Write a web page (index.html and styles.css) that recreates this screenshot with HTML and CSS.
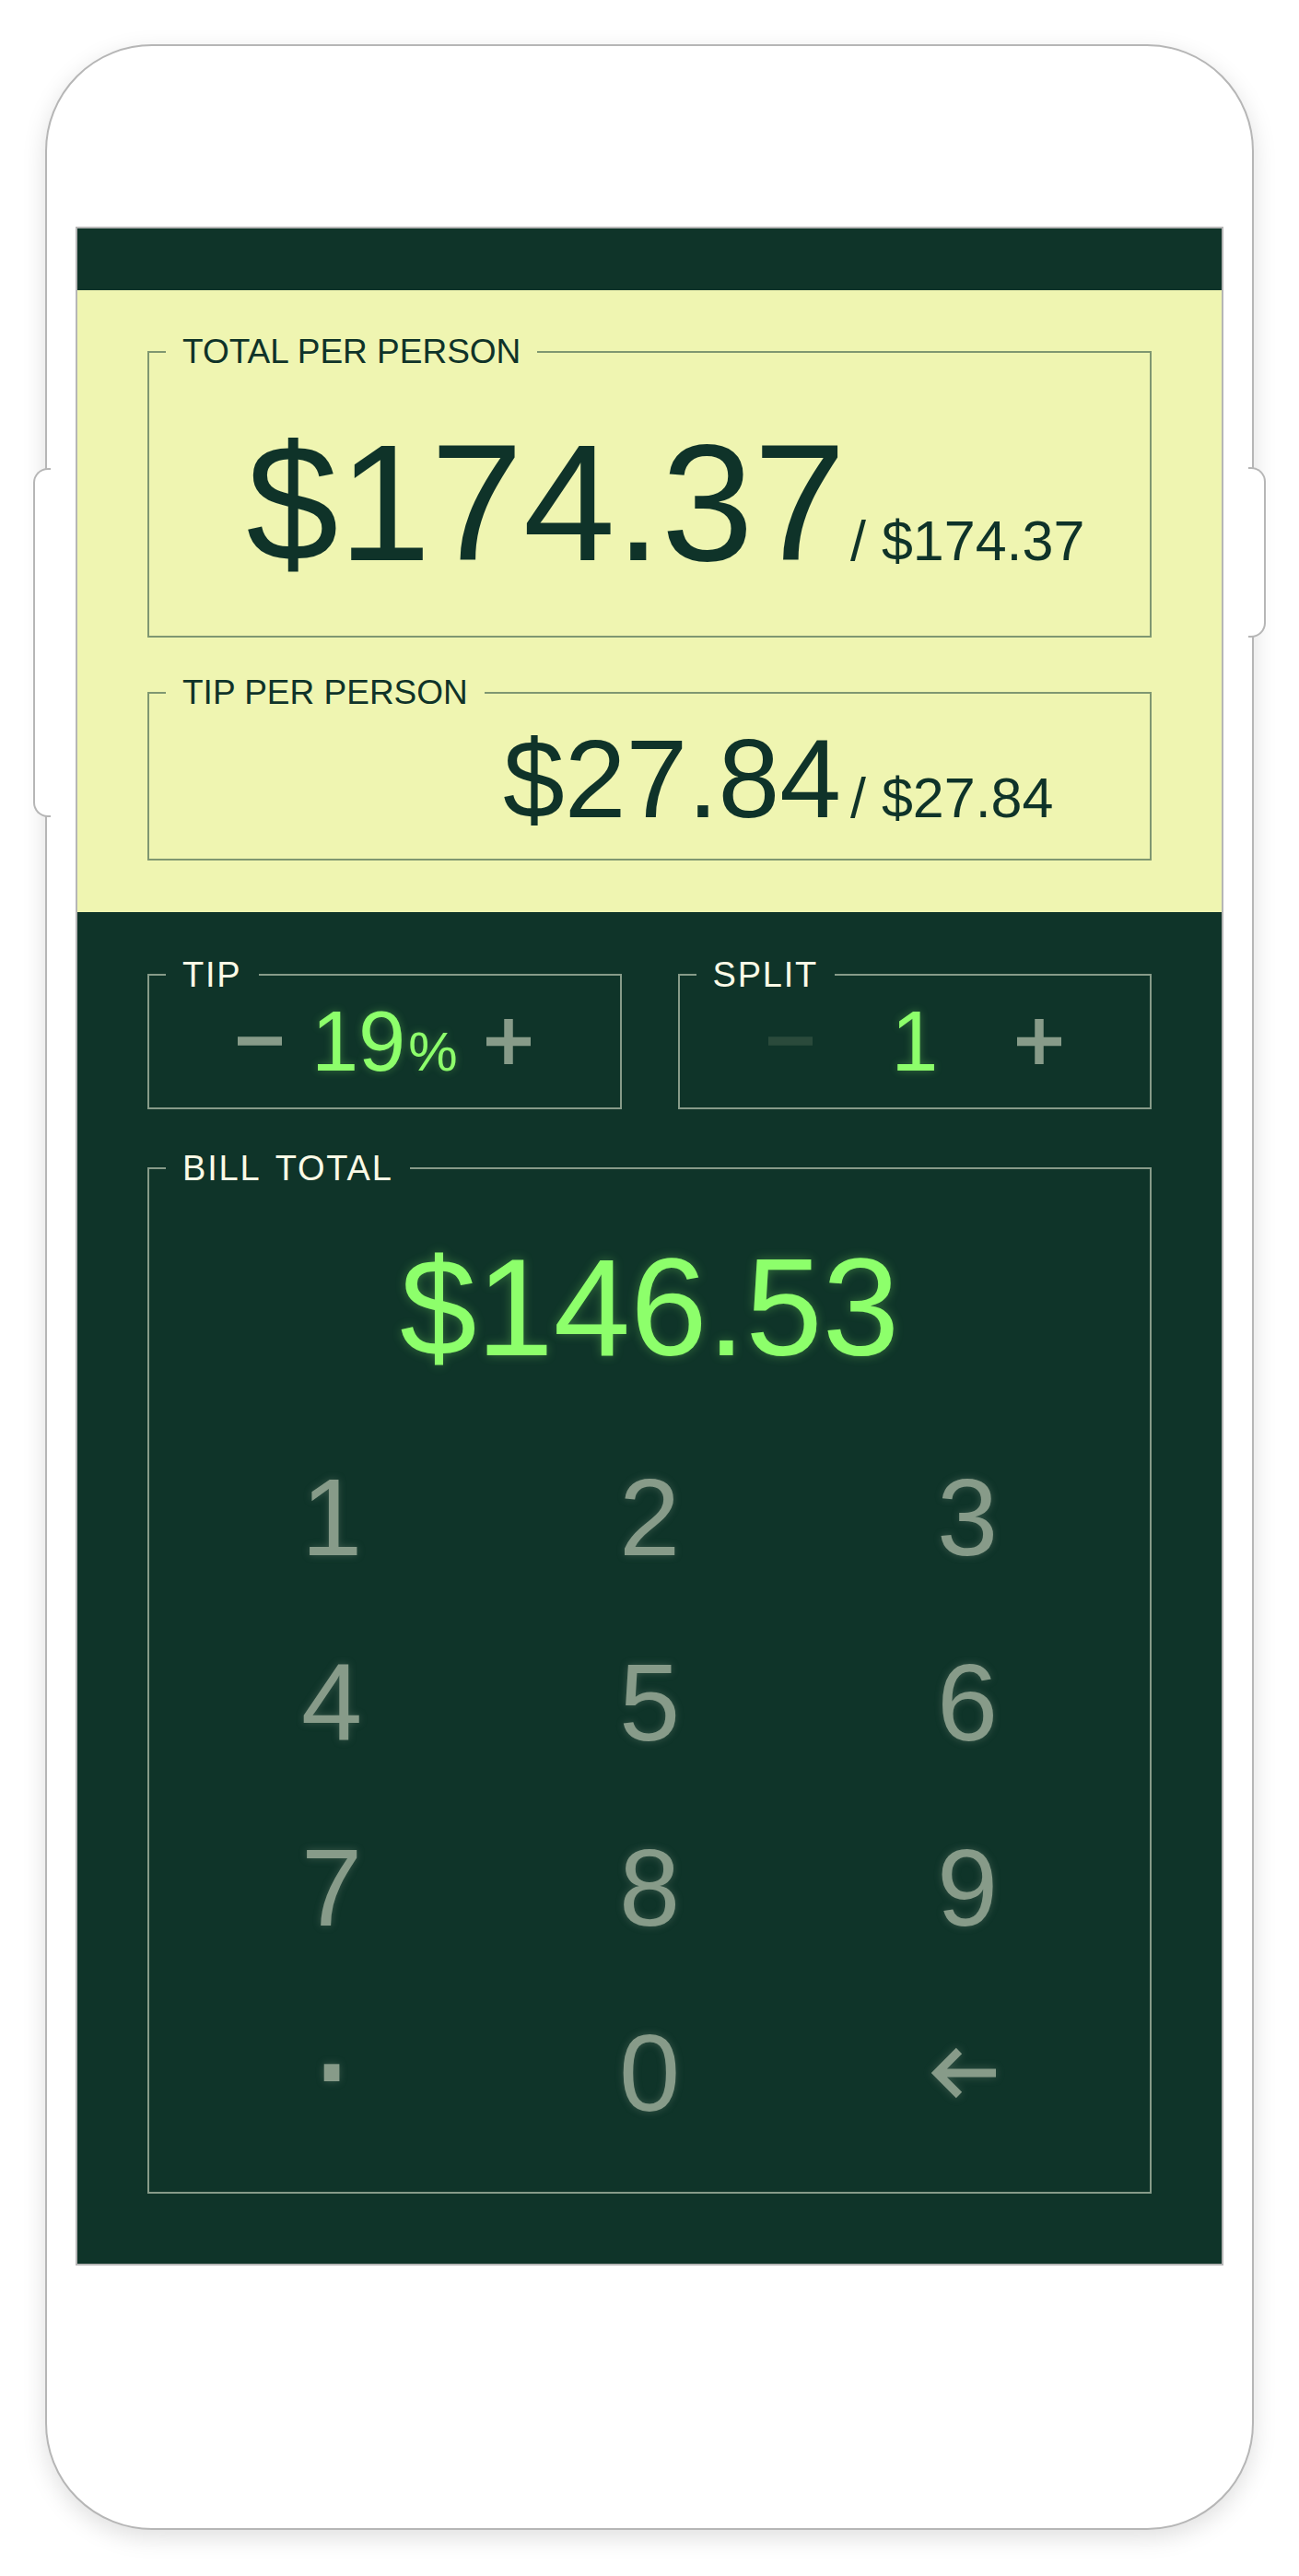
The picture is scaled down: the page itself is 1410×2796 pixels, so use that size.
FILE: index.html
```html
<!DOCTYPE html>
<html lang="en">
<head>
<meta charset="utf-8">
<title>Tip Calculator</title>
<link rel="stylesheet" href="styles.css">
</head>
<body>
<div class="page">
  <div class="phone">
    <div class="screen">
      <div class="status"></div>
      <section class="results">
        <fieldset class="panel panel-light">
          <legend>TOTAL PER PERSON</legend>
          <div class="amount-row amount-row-total">
            <span class="amount-main">$174.37</span>
            <span class="amount-sub">/ $174.37</span>
          </div>
        </fieldset>
        <fieldset class="panel panel-light panel-tip-pp">
          <legend>TIP PER PERSON</legend>
          <div class="amount-row amount-row-tip">
            <span class="amount-main">$27.84</span>
            <span class="amount-sub">/ $27.84</span>
          </div>
        </fieldset>
      </section>
      <section class="controls">
        <div class="steppers">
          <fieldset class="panel panel-dark">
            <legend>TIP</legend>
            <div class="stepper">
              <button class="step" aria-label="decrease tip"><svg width="48" height="48" viewBox="0 0 48 48"><path d="M0 24H48" stroke="currentColor" stroke-width="9.5"/></svg></button>
              <div class="step-value">19<span class="pct">%</span></div>
              <button class="step" aria-label="increase tip"><svg width="48" height="49" viewBox="0 0 48 49"><path d="M0 24.5H48M24 0V49" stroke="currentColor" stroke-width="9.5"/></svg></button>
            </div>
          </fieldset>
          <fieldset class="panel panel-dark">
            <legend>SPLIT</legend>
            <div class="stepper">
              <button class="step step-disabled" aria-label="decrease split"><svg width="48" height="48" viewBox="0 0 48 48"><path d="M0 24H48" stroke="currentColor" stroke-width="9.5"/></svg></button>
              <div class="step-value">1</div>
              <button class="step" aria-label="increase split"><svg width="48" height="49" viewBox="0 0 48 49"><path d="M0 24.5H48M24 0V49" stroke="currentColor" stroke-width="9.5"/></svg></button>
            </div>
          </fieldset>
        </div>
        <fieldset class="panel panel-dark panel-bill">
          <legend>BILL TOTAL</legend>
          <div class="bill-amount">$146.53</div>
          <div class="keypad">
            <button class="key">1</button>
            <button class="key">2</button>
            <button class="key">3</button>
            <button class="key">4</button>
            <button class="key">5</button>
            <button class="key">6</button>
            <button class="key">7</button>
            <button class="key">8</button>
            <button class="key">9</button>
            <button class="key"><span class="key-dot">.</span></button>
            <button class="key">0</button>
            <button class="key key-back" aria-label="backspace"><svg width="70" height="56" viewBox="0 0 70 56"><path d="M30 4 6 28l24 24M8 28h62" fill="none" stroke="currentColor" stroke-width="9"/></svg></button>
          </div>
        </fieldset>
      </section>
    </div>
  </div>
</div>
</body>
</html>
```
FILE: styles.css
```css
* {
  box-sizing: border-box;
}

body {
  margin: 0;
  background: #ffffff;
  font-family: "Liberation Sans", Arial, Helvetica, sans-serif;
}

.page {
  display: flex;
  justify-content: center;
  padding: 48px 0 50px;
}

.phone {
  position: relative;
  width: 1312px;
  border: 2px solid #b6b6b6;
  border-radius: 116px;
  background: #ffffff;
  padding: 196px 31px 285px;
  box-shadow: 0 8px 26px rgba(0, 0, 0, 0.13);
}

.phone::before,
.phone::after {
  content: "";
  position: absolute;
  width: 17px;
  background: #ffffff;
  border: 2px solid #b6b6b6;
}

.phone::before {
  left: -15px;
  top: 458px;
  height: 375px;
  border-right: 0;
  border-radius: 16px 0 0 16px;
}

.phone::after {
  right: -15px;
  top: 457px;
  height: 181px;
  border-left: 0;
  border-radius: 0 16px 16px 0;
}

.screen {
  border: 2px solid #b6b6b6;
  background: #0f3429;
}

.status {
  height: 67px;
  background: #0f3429;
}

.results {
  background: #eff5b1;
  padding: 48px 76px 56px;
}

.controls {
  background: #0f3429;
  padding: 49px 76px 76px;
}

.panel {
  margin: 0;
  padding: 0;
  min-width: 0;
  border: 2px solid;
}

.panel legend {
  margin-left: 18px;
  padding: 0 18px;
  font-size: 37px;
  line-height: 38px;
}

.panel-light {
  border-color: #7f9771;
  color: #0f3329;
}

.panel-tip-pp {
  margin-top: 41px;
}

.panel-dark {
  border-color: #879b89;
}

.panel-dark legend {
  color: #fbfae6;
  font-size: 38px;
  letter-spacing: 1.8px;
  word-spacing: 5px;
}

.amount-row {
  display: grid;
  grid-template-columns: 1fr 325px;
  column-gap: 5px;
  align-items: baseline;
}

.amount-main {
  text-align: right;
  line-height: 1;
}

.amount-sub {
  font-size: 61px;
  line-height: 1;
}

.amount-row-total {
  padding: 55px 0 54px;
}

.amount-row-total .amount-main {
  font-size: 180px;
}

.amount-row-tip {
  padding: 14px 0 27px;
}

.amount-row-tip .amount-main {
  font-size: 120px;
  margin-right: 5px;
}

.steppers {
  display: grid;
  grid-template-columns: 1fr 1fr;
  column-gap: 61px;
}

.stepper {
  display: flex;
  justify-content: center;
  align-items: center;
  padding: 8px 0 27px;
}

.step {
  width: 80px;
  height: 90px;
  display: flex;
  align-items: center;
  justify-content: center;
  padding: 0;
  border: 0;
  background: none;
  color: #879b89;
}

.step svg {
  display: block;
}

.step-disabled {
  color: #2a4a3b;
}

.step-value {
  width: 190px;
  height: 90px;
  text-align: center;
  font-size: 92px;
  line-height: 90px;
  color: #8dff6b;
  text-shadow: 0 0 10px rgba(141, 255, 107, 0.3);
}

.pct {
  font-size: 60px;
  line-height: 1;
  margin-left: 3px;
}

.panel-bill {
  margin-top: 45px;
}

.bill-amount {
  padding-top: 57px;
  text-align: center;
  font-size: 150px;
  line-height: 1;
  color: #8dff6b;
  text-shadow: 0 0 12px rgba(141, 255, 107, 0.3);
}

.keypad {
  display: grid;
  grid-template-columns: repeat(3, 345px);
  grid-template-rows: repeat(4, 201px);
  justify-content: center;
  margin-top: 52px;
  padding-bottom: 29px;
}

.key {
  display: flex;
  align-items: center;
  justify-content: center;
  padding: 0;
  border: 0;
  background: none;
  font-family: inherit;
  font-size: 119px;
  line-height: 1;
  color: #879b89;
  text-shadow: 0 0 9px rgba(135, 155, 137, 0.35);
}

.key-dot {
  font-size: 175px;
  transform: translateY(-51px);
}

.key-back svg {
  display: block;
  margin-right: 9px;
  filter: drop-shadow(0 0 5px rgba(135, 155, 137, 0.35));
}
```
